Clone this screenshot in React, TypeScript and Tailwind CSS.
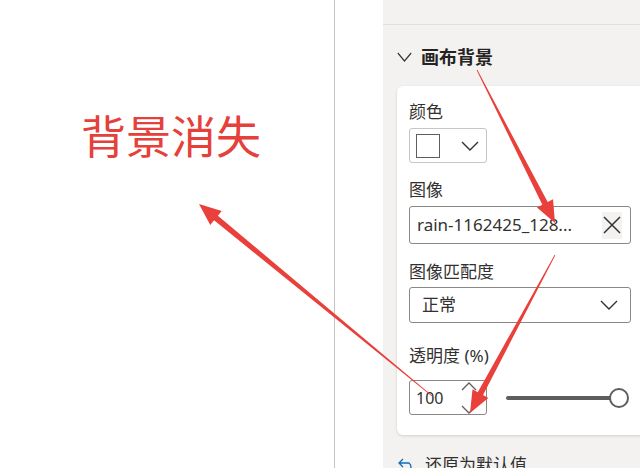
const arrow = (x1: number, y1: number, x2: number, y2: number, w = 6, head = 22, hw = 9) => {
  const dx = x2 - x1;
  const dy = y2 - y1;
  const len = Math.hypot(dx, dy);
  const ux = dx / len;
  const uy = dy / len;
  const px = -uy;
  const py = ux;
  const bx = x2 - ux * head;
  const by = y2 - uy * head;
  const pts = [
    [x1 + px * 0.4, y1 + py * 0.4],
    [bx + (px * w) / 2, by + (py * w) / 2],
    [bx + px * hw, by + py * hw],
    [x2, y2],
    [bx - px * hw, by - py * hw],
    [bx - (px * w) / 2, by - (py * w) / 2],
    [x1 - px * 0.4, y1 - py * 0.4],
  ];
  return pts.map((p) => p.join(",")).join(" ");
};

const Chevron = ({ className = "", w = 18 }: { className?: string; w?: number }) => (
  <svg width={w} height="10" viewBox="0 0 18 10" preserveAspectRatio="none" className={className}>
    <path d="M1 1 L9 9 L17 1" fill="none" stroke="#323130" strokeWidth="1.4" />
  </svg>
);

const Label = ({ children, className = "" }: { children: string; className?: string }) => (
  <div className={"text-[17px] leading-6 text-[#323130] " + className}>{children}</div>
);

export default function App() {
  return (
    <div
      className="relative w-[640px] h-[468px] flex overflow-hidden bg-white"
      style={{ fontFamily: "'Noto Sans', 'Noto Sans CJK SC', sans-serif" }}
    >
      <div className="w-[335px] shrink-0 h-full border-r border-[#c8c6c4] bg-white">
        <div className="ml-[81px] mt-[109px] text-[45px] leading-[56px] text-[#e5403a]">
          背景消失
        </div>
      </div>
      <div className="w-[48px] shrink-0 h-full bg-white" />
      <div className="flex-1 min-w-0 overflow-hidden h-full bg-[#f3f2f1]">
        <div className="h-[25px] border-b border-[#e1dfdd]" />
        <div className="flex items-center h-[61px] pl-[14px] pt-[3px]">
          <Chevron w={15} className="mr-[9px]" />
          <span className="text-[18px] font-bold text-[#252423]">画布背景</span>
        </div>
        <div className="ml-[14px] w-[260px] bg-white rounded-[6px] shadow-[0_1px_3px_rgba(0,0,0,0.14)] px-[12px] pt-[14px] pb-[20px]">
          <Label>颜色</Label>
          <div className="mt-[4px] w-[78px] h-[35px] border border-[#c8c6c4] rounded-[3px] flex items-center pl-[6px]">
            <div className="w-[24px] h-[24px] border border-[#605e5c] bg-white" />
            <Chevron className="ml-[21px]" />
          </div>
          <Label className="mt-[15px]">图像</Label>
          <div className="mt-[4px] w-[222px] h-[38px] border border-[#8a8886] rounded-[3px] flex items-center pl-[7px] pr-[8px]">
            <span className="flex-1 text-[17px] text-[#323130] truncate">rain-1162425_128...</span>
            <div className="w-[20px] h-[27px] bg-[#f3f2f1] flex items-center justify-center">
              <svg width="18" height="18" viewBox="0 0 18 18">
                <path d="M1 1 L17 17 M17 1 L1 17" stroke="#323130" strokeWidth="1.5" />
              </svg>
            </div>
          </div>
          <Label className="mt-[16px]">图像匹配度</Label>
          <div className="mt-[3px] w-[222px] h-[36px] border border-[#8a8886] rounded-[3px] flex items-center pl-[12px] pr-[12px]">
            <span className="flex-1 text-[17px] text-[#323130]">正常</span>
            <Chevron />
          </div>
          <Label className="mt-[21px]">透明度 (%)</Label>
          <div className="mt-[12px] flex items-center">
            <div className="w-[78px] h-[35px] border border-[#8a8886] rounded-[3px] flex items-center pl-[6px] relative">
              <span className="text-[16px] text-[#323130]">100</span>
              <svg width="18" height="34" viewBox="0 0 18 34" className="absolute right-[8px] top-0">
                <path d="M2 9 L9 2 L16 9" fill="none" stroke="#605e5c" strokeWidth="1.3" />
                <path d="M2 25 L9 32 L16 25" fill="none" stroke="#605e5c" strokeWidth="1.3" />
              </svg>
            </div>
            <div className="ml-[19px] w-[106px] h-[4px] rounded-full bg-[#605e5c]" />
            <div className="w-[20px] h-[20px] -ml-[3px] rounded-full border-2 border-[#605e5c] bg-white" />
          </div>
        </div>
        <div className="flex items-center mt-[17px] pl-[15px] text-[17px] text-[#323130]">
          <svg width="18" height="14" viewBox="0 0 18 14" className="mr-[9px]">
            <path d="M5 1 L1 5 L5 9 M1 5 H11 A5 5 0 0 1 11 13 H8" fill="none" stroke="#0f6cbd" strokeWidth="1.3" />
          </svg>
          还原为默认值
        </div>
      </div>
      <svg className="absolute inset-0 pointer-events-none" width="640" height="468">
        <polygon points={arrow(477, 70, 555, 223)} fill="#e9403b" />
        <polygon points={arrow(555, 255, 470, 413)} fill="#e9403b" />
        <polygon points={arrow(432, 396, 199, 204)} fill="#e9403b" />
      </svg>
    </div>
  );
}
